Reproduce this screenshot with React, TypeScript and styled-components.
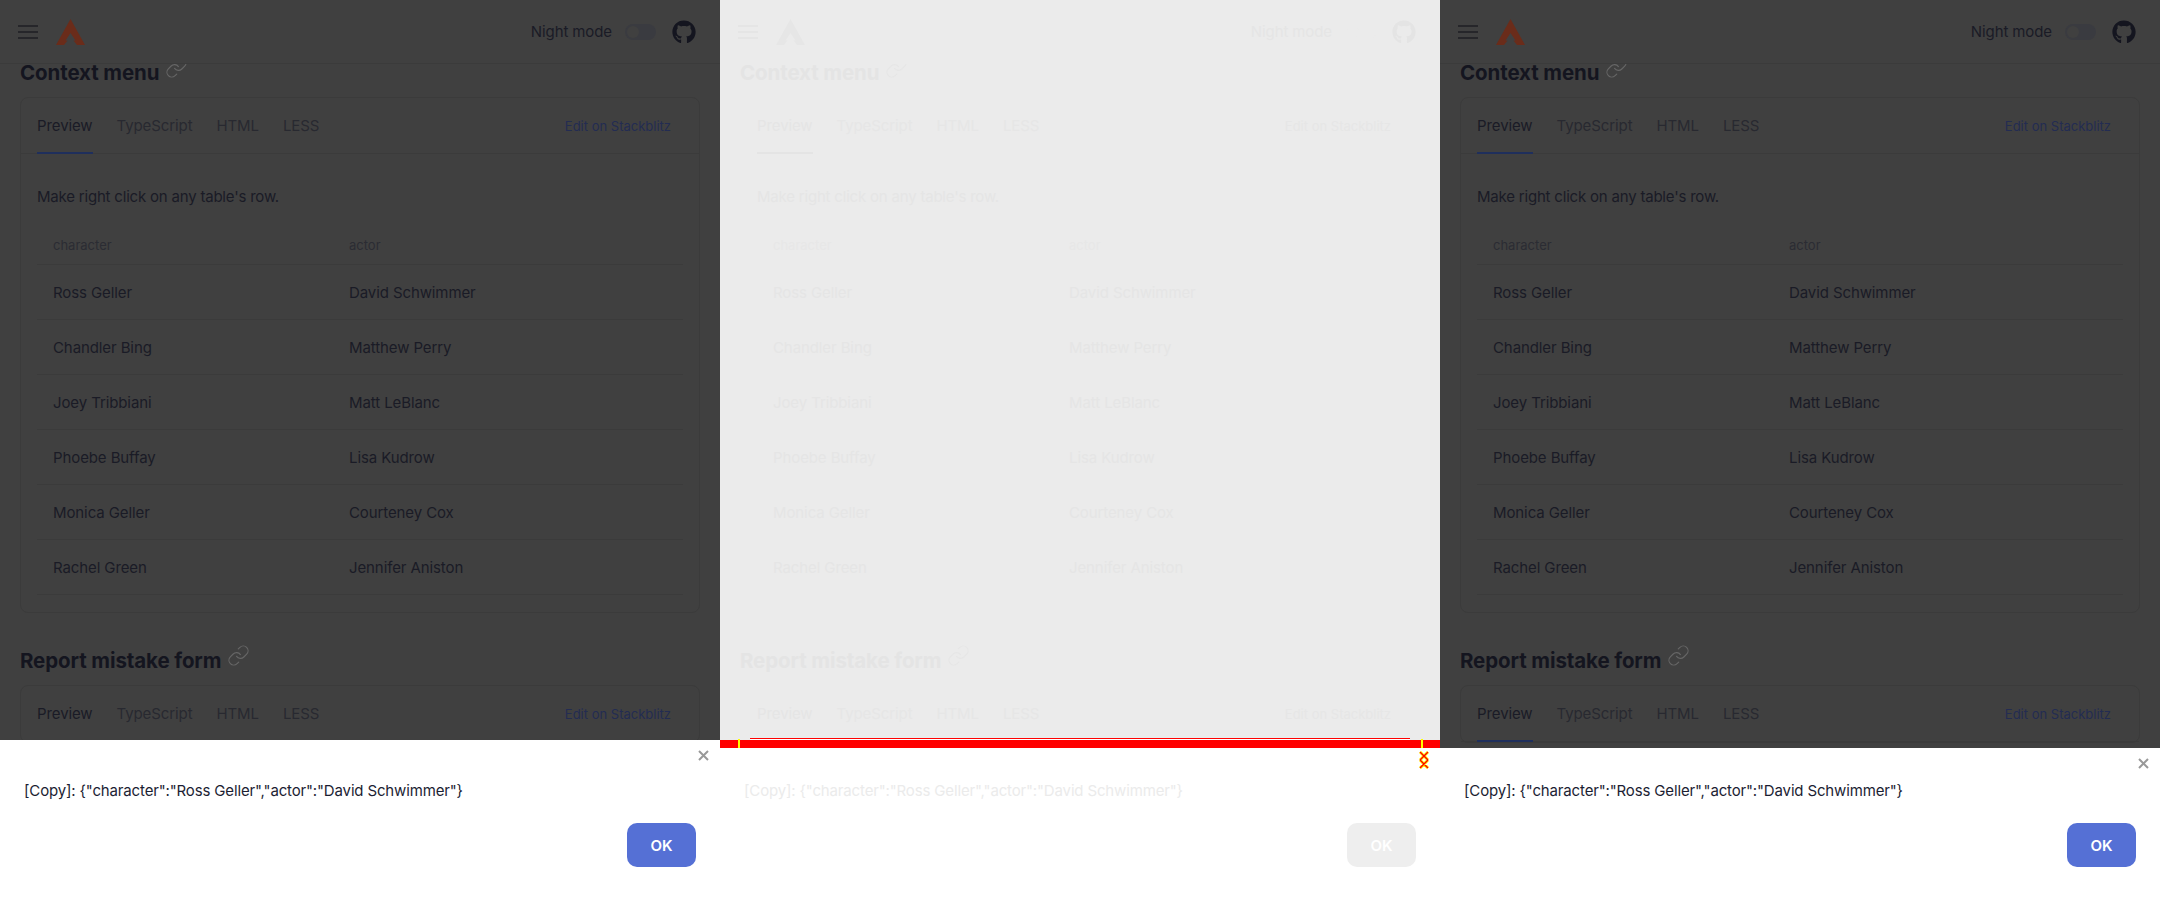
import { ThemeProvider, createGlobalStyle, styled } from 'styled-components';
import { Link as LinkGlyph } from 'lucide-react';
import { FaGithub } from 'react-icons/fa';

const dark = {
  page: '#404040',
  line: '#3b3b3b',
  title: '#14151f',
  text: '#1a1b26',
  tab: '#282930',
  muted: '#2b2c33',
  link: '#232c52',
  accent: '#1f2f5c',
  icon: '#666666',
  logo: '#6a2c1a',
  burger: '#26262a',
  track: '#3a3b40',
  knob: '#404040',
  dialogText: '#1c1e33',
  ok: '#5570d5',
  okText: '#ffffff',
  close: '#999999',
};

const ghost = {
  page: '#ebebeb',
  line: '#ebebeb',
  title: '#e4e4e4',
  text: '#e5e5e5',
  tab: '#e6e6e6',
  muted: '#e7e7e7',
  link: '#e6e6e6',
  accent: '#e4e4e4',
  icon: '#e6e6e6',
  logo: '#e6e6e6',
  burger: '#e5e5e5',
  track: '#ebebeb',
  knob: '#ebebeb',
  dialogText: '#ebebeb',
  ok: '#eeeeee',
  okText: '#ffffff',
  close: 'transparent',
};

const GlobalStyle = createGlobalStyle`
  html, body {
    margin: 0;
    padding: 0;
    background: #ffffff;
  }
  body {
    font-family: Inter, "Noto Sans", sans-serif;
    overflow: hidden;
  }
`;

const Frames = styled.div`
  display: grid;
  grid-template-columns: repeat(3, 720px);
  width: 2160px;
  height: 900px;
`;

const Panel = styled.section`
  position: relative;
  height: 900px;
  overflow: hidden;
  background: ${p => p.theme.page};
`;

const Header = styled.header`
  position: relative;
  z-index: 1;
  display: flex;
  align-items: center;
  height: 63px;
  padding: 0 24px 0 18px;
  background: ${p => p.theme.page};
  border-bottom: 1px solid ${p => p.theme.line};
`;

const Burger = styled.svg`
  width: 20px;
  height: 14px;
  margin-right: 18px;
  stroke: ${p => p.theme.burger};
`;

const Logo = styled.svg`
  width: 29px;
  height: 26px;
  fill: ${p => p.theme.logo};
`;

const NightLabel = styled.span`
  margin-left: auto;
  font-size: 15px;
  letter-spacing: -0.1px;
  color: ${p => p.theme.text};
`;

const Toggle = styled.span`
  display: flex;
  align-items: center;
  width: 31px;
  height: 16px;
  margin: 0 16px 0 13px;
  padding: 0 2px;
  box-sizing: border-box;
  border-radius: 8px;
  background: ${p => p.theme.track};
`;

const Knob = styled.span`
  width: 12px;
  height: 12px;
  border-radius: 50%;
  background: ${p => p.theme.knob};
`;

const Github = styled(FaGithub)`
  width: 24px;
  height: 24px;
  color: ${p => p.theme.title};
`;

const Main = styled.main`
  margin-top: -7px;
  padding: 0 20px;
`;

const Title = styled.h2`
  display: flex;
  align-items: center;
  gap: 6px;
  height: 30px;
  margin: 0 0 10px;
  font-size: 20.5px;
  font-weight: 700;
  letter-spacing: -0.1px;
  color: ${p => p.theme.title};
`;

const LinkIcon = styled(LinkGlyph)`
  width: 23px;
  height: 23px;
  margin-top: -10px;
  stroke-width: 1.2;
  color: ${p => p.theme.icon};
`;

const Card = styled.article`
  border: 1px solid ${p => p.theme.line};
  border-radius: 8px;
  margin-bottom: 32px;
`;

const TabBar = styled.nav`
  display: flex;
  align-items: stretch;
  gap: 24px;
  height: 55px;
  padding: 0 28px 0 16px;
  border-bottom: 1px solid ${p => p.theme.line};
`;

const Tab = styled.span<{ $active?: boolean }>`
  display: flex;
  align-items: center;
  height: 56px;
  box-sizing: border-box;
  font-size: 15px;
  letter-spacing: -0.1px;
  color: ${p => (p.$active ? p.theme.text : p.theme.tab)};
  border-bottom: 2px solid ${p => (p.$active ? p.theme.accent : 'transparent')};
`;

const EditLink = styled.a`
  display: flex;
  align-items: center;
  margin-left: auto;
  font-size: 13px;
  color: ${p => p.theme.link};
`;

const Body = styled.div`
  padding: 31px 16px 17px;
`;

const Intro = styled.p`
  margin: 0 0 17px;
  font-size: 15px;
  line-height: 24px;
  letter-spacing: -0.2px;
  color: ${p => p.theme.text};
`;

const Table = styled.table`
  width: 100%;
  table-layout: fixed;
  border-collapse: collapse;
`;

const Head = styled.th`
  height: 38px;
  padding: 0 16px;
  font-size: 13px;
  font-weight: 400;
  text-align: left;
  color: ${p => p.theme.muted};
  border-bottom: 1px solid ${p => p.theme.line};
  &:first-child {
    width: 264px;
  }
`;

const Cell = styled.td`
  height: 54px;
  padding: 0 16px;
  font-size: 15px;
  letter-spacing: -0.1px;
  color: ${p => p.theme.text};
  border-bottom: 1px solid ${p => p.theme.line};
`;

const Dialog = styled.aside<{ $top: number; $flagged?: boolean }>`
  position: absolute;
  z-index: 2;
  left: 0;
  right: 0;
  top: ${p => p.$top}px;
  bottom: 0;
  box-sizing: border-box;
  padding: 0 24px;
  background: #ffffff;
  border-top: ${p => (p.$flagged ? '8px solid #ff0000' : '0')};
`;

const Close = styled.svg<{ $top: number }>`
  position: absolute;
  top: ${p => p.$top}px;
  right: 11px;
  width: 11px;
  height: 11px;
  stroke: ${p => p.theme.close};
  stroke-width: 2;
`;

const Message = styled.p<{ $top: number }>`
  position: absolute;
  top: ${p => p.$top}px;
  left: 24px;
  margin: 0;
  font-size: 15px;
  line-height: 24px;
  letter-spacing: -0.15px;
  color: ${p => p.theme.dialogText};
`;

const OkButton = styled.button<{ $top: number }>`
  position: absolute;
  top: ${p => p.$top}px;
  right: 24px;
  width: 69px;
  height: 44px;
  border: 0;
  border-radius: 10px;
  font-family: inherit;
  font-size: 15px;
  font-weight: 600;
  color: ${p => p.theme.okText};
  background: ${p => p.theme.ok};
`;

const DiffLine = styled.i`
  position: absolute;
  z-index: 3;
  left: 30px;
  right: 30px;
  top: 738px;
  height: 1px;
  background: #ff0000;
  box-shadow: 0 1px 0 #ffffff;
`;

const DiffTick = styled.i<{ $left: number }>`
  position: absolute;
  z-index: 3;
  top: 739px;
  left: ${p => p.$left}px;
  width: 2px;
  height: 9px;
  background: #ffff00;
`;

const DiffMark = styled.svg`
  position: absolute;
  z-index: 3;
  top: 751px;
  right: 11px;
  width: 10px;
  height: 18px;
  fill: none;
`;

const rows = [
  ['Ross Geller', 'David Schwimmer'],
  ['Chandler Bing', 'Matthew Perry'],
  ['Joey Tribbiani', 'Matt LeBlanc'],
  ['Phoebe Buffay', 'Lisa Kudrow'],
  ['Monica Geller', 'Courteney Cox'],
  ['Rachel Green', 'Jennifer Aniston'],
];

function Tabs() {
  return (
    <TabBar>
      <Tab $active>Preview</Tab>
      <Tab>TypeScript</Tab>
      <Tab>HTML</Tab>
      <Tab>LESS</Tab>
      <EditLink>Edit on Stackblitz</EditLink>
    </TabBar>
  );
}

function Page({ top, flagged, closeTop }: { top: number; flagged?: boolean; closeTop: number }) {
  const border = flagged ? 8 : 0;
  return (
    <Panel>
      <Header>
        <Burger viewBox="0 0 20 14">
          <path d="M0 1h20M0 7h20M0 13h20" strokeWidth="2" />
        </Burger>
        <Logo viewBox="0 0 29 26">
          <path d="M14.5 0 29 26H21L17.5 21.5H19.5L14.5 14 9.5 21.5H11.5L8 26H0Z" />
        </Logo>
        <NightLabel>Night mode</NightLabel>
        <Toggle><Knob /></Toggle>
        <Github />
      </Header>
      <Main>
        <Title>Context menu <LinkIcon /></Title>
        <Card>
          <Tabs />
          <Body>
            <Intro>Make right click on any table's row.</Intro>
            <Table>
              <thead>
                <tr>
                  <Head>character</Head>
                  <Head>actor</Head>
                </tr>
              </thead>
              <tbody>
                {rows.map(([character, actor]) => (
                  <tr key={character}>
                    <Cell>{character}</Cell>
                    <Cell>{actor}</Cell>
                  </tr>
                ))}
              </tbody>
            </Table>
          </Body>
        </Card>
        <Title>Report mistake form <LinkIcon /></Title>
        <Card>
          <Tabs />
        </Card>
      </Main>
      <Dialog $top={top} $flagged={flagged}>
        <Close $top={closeTop - top - border} viewBox="0 0 11 11">
          <path d="M1 1l9 9M10 1l-9 9" />
        </Close>
        <Message $top={779 - top - border}>
          {'[Copy]: {"character":"Ross Geller","actor":"David Schwimmer"}'}
        </Message>
        <OkButton $top={823 - top - border}>OK</OkButton>
      </Dialog>
      {flagged && (
        <>
          <DiffLine />
          <DiffTick $left={18} />
          <DiffTick $left={701} />
          <DiffMark viewBox="0 0 10 18">
            <path d="M1 1l8 8M9 1L1 9M1 9l8 8M9 9l-8 8" stroke="#ffff00" strokeWidth="3" />
            <path d="M1 1l8 8M9 1L1 9M1 9l8 8M9 9l-8 8" stroke="#ff0000" strokeWidth="1.4" />
          </DiffMark>
        </>
      )}
    </Panel>
  );
}

export default function App() {
  return (
    <>
      <GlobalStyle />
      <Frames>
        <ThemeProvider theme={dark}>
          <Page top={740} closeTop={750} />
        </ThemeProvider>
        <ThemeProvider theme={ghost}>
          <Page top={740} closeTop={759} flagged />
        </ThemeProvider>
        <ThemeProvider theme={dark}>
          <Page top={748} closeTop={758} />
        </ThemeProvider>
      </Frames>
    </>
  );
}
